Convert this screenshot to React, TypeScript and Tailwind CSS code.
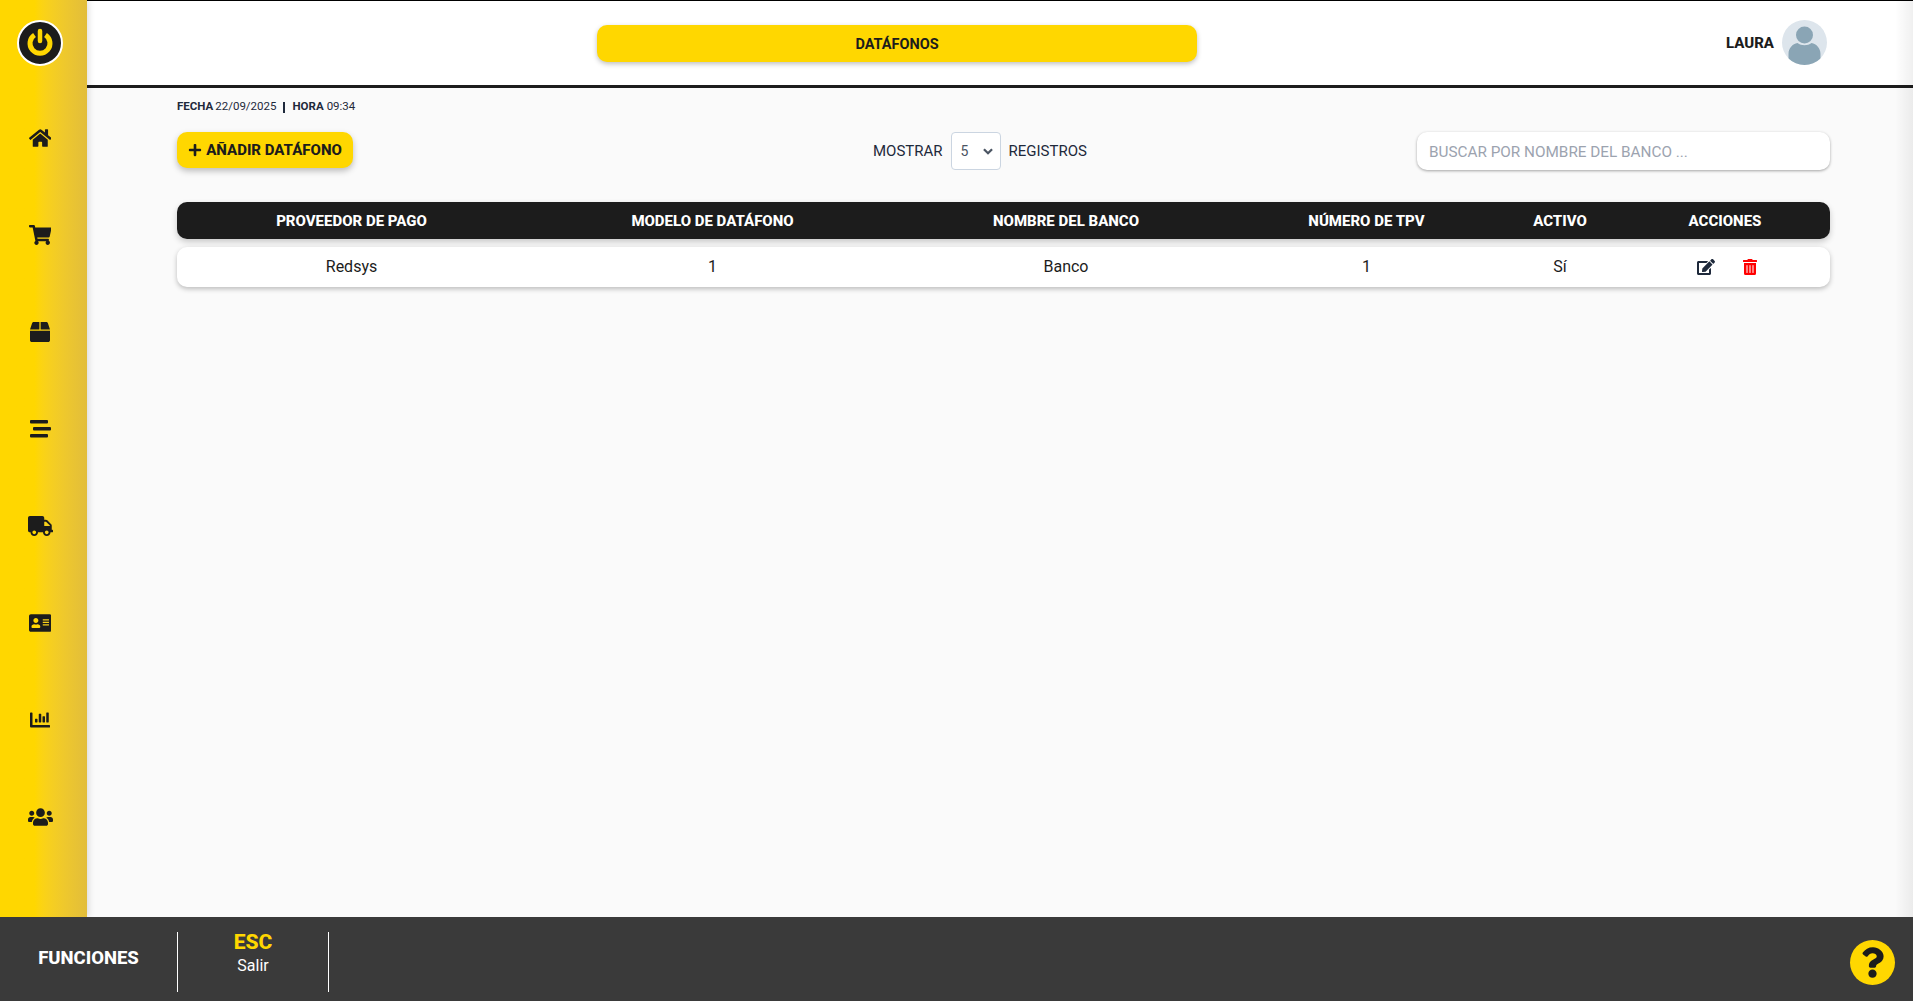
import { FaHome, FaShoppingCart, FaBox, FaTruck, FaAddressCard, FaChartBar, FaUsers, FaEdit, FaTrashAlt, FaPlus, FaQuestion } from "react-icons/fa";

function Bars({ className }: { className?: string }) {
  return (
    <svg viewBox="0 0 21 18" className={className} fill="#1c1c1c">
      <rect x="0" y="0" width="18" height="3.500" rx="1" />
      <rect x="3" y="7" width="18" height="3.500" rx="1" />
      <rect x="0" y="14" width="18" height="3.500" rx="1" />
    </svg>
  );
}

const nav = [
  { I: FaHome, c: "h-[20px] w-[22.500px]" },
  { I: FaShoppingCart, c: "h-[20px] w-[22.500px]" },
  { I: FaBox, c: "h-[20px] w-[20px]" },
  { I: Bars, c: "h-[18px] w-[21px]" },
  { I: FaTruck, c: "h-[20px] w-[25px]" },
  { I: FaAddressCard, c: "h-[20px] w-[22.500px]" },
  { I: FaChartBar, c: "h-[20px] w-[20px]" },
  { I: FaUsers, c: "h-[20px] w-[25px]" },
];
const cols = ["PROVEEDOR DE PAGO", "MODELO DE DATÁFONO", "NOMBRE DEL BANCO", "NÚMERO DE TPV", "ACTIVO", "ACCIONES"];
const row = ["Redsys", "1", "Banco", "1", "Sí"];
const grid = "grid grid-cols-[349px_373px_334px_267px_120px_210px] items-center";

function Power() {
  return (
    <div className="flex h-[46px] w-[46px] items-center justify-center rounded-full border-2 border-white bg-[#1c1c1c]">
      <svg viewBox="0 0 32 32" className="h-[32px] w-[32px]" fill="none" stroke="#ffd700" strokeLinecap="round">
        <path d="M10.500 8a10 10 0 1 0 11 0" strokeWidth="5" strokeLinecap="butt" />
        <path d="M16 4v10" strokeWidth="4.500" />
      </svg>
    </div>
  );
}

function Avatar() {
  return (
    <svg viewBox="0 0 45 45" className="h-[45px] w-[45px]">
      <defs>
        <clipPath id="av"><circle cx="22.5" cy="22.5" r="22.5" /></clipPath>
      </defs>
      <g clipPath="url(#av)">
        <rect width="45" height="45" fill="#dde5ec" />
        <circle cx="22.5" cy="15" r="8.5" fill="#8aa5b5" />
        <path d="M6.500 45V34c0-6 4-10 9-11 2 1.500 4.500 2.200 7 2.200s5-.7 7-2.200c5 1 9 5 9 11v11z" fill="#8aa5b5" />
      </g>
    </svg>
  );
}

export default function App() {
  return (
    <div className="relative flex h-[1001px] w-[1913px] flex-col overflow-hidden bg-[#fafafa] font-['Roboto',sans-serif] text-[#1c1c1c]">
      <div className="flex min-h-0 flex-1">
        <aside className="z-10 flex w-[87px] shrink-0 flex-col bg-gradient-to-r from-[#ffd700] from-40% to-[#e2bd3a] pr-[7px] shadow-[2px_0_6px_rgba(0,0,0,0.12)]">
          <div className="flex h-[85px] items-center justify-center pt-[1px]"><Power /></div>
          <nav className="flex flex-col items-center pt-[4px]">
            {nav.map(({ I, c }, i) => (
              <div key={i} className="flex h-[97px] w-full items-center justify-center">
                <I className={`${c} text-[#1c1c1c]`} />
              </div>
            ))}
          </nav>
        </aside>
        <div className="flex min-w-0 flex-1 flex-col">
          <header className="flex h-[88px] shrink-0 items-center justify-between border-t border-b-[3px] border-t-black border-b-[#1c1c1c] bg-white pr-[86px]">
            <div className="ml-[510px] flex h-[37px] w-[600px] items-center justify-center rounded-[10px] bg-[#ffd700] pt-[3px] text-[14.500px] font-bold shadow-[0_2px_5px_rgba(0,0,0,0.25)]">DATÁFONOS</div>
            <div className="mt-[-2px] flex items-center gap-[8px]">
              <span className="pt-[2px] text-[15px] font-extrabold">LAURA</span>
              <Avatar />
            </div>
          </header>
          <main className="flex-1 pl-[90px] pr-[83px] pt-[11px]">
            <div className="flex h-[16px] items-center text-[11.500px] text-[#1e293b]">
              <b>FECHA</b><span className="ml-[2px]">22/09/2025</span>
              <span className="mx-[7px] h-[11px] w-[2px] bg-[#1e293b]" />
              <b>HORA</b><span className="ml-[3px]">09:34</span>
            </div>
            <div className="mt-[17px] flex h-[38px] items-center">
              <button className="mb-[2px] flex h-[36px] w-[176px] items-center justify-center gap-[4px] rounded-[10px] bg-[#ffd700] text-[15px] font-extrabold text-[#1c1c1c] shadow-[0_3px_6px_rgba(0,0,0,0.25)]">
                <FaPlus className="h-[14px] w-[14px]" />AÑADIR DATÁFONO
              </button>
              <div className="ml-[520px] flex items-center gap-[8px] text-[15px] text-[#1e293b]">
                <span>MOSTRAR</span>
                <div className="flex h-[38px] w-[50px] items-center justify-between rounded-[4px] border border-[#cbd5e1] bg-white pl-[9px] pr-[3px] text-[14px] text-[#4b5563]">
                  5
                  <svg viewBox="0 0 20 20" className="h-[18px] w-[18px]" fill="none" stroke="#4b5563" strokeWidth="2.500"><path d="M5.500 8l4.500 4.500L14.500 8" /></svg>
                </div>
                <span>REGISTROS</span>
              </div>
              <input readOnly placeholder="BUSCAR POR NOMBRE DEL BANCO ..." className="ml-auto h-[38px] w-[413px] rounded-[10px] bg-white px-[12px] pt-[1px] text-[15.300px] text-[#9ca3af] shadow-[0_1px_3px_rgba(0,0,0,0.35)] outline-none placeholder:text-[#9ca3af]" />
            </div>
            <div className={`${grid} mt-[32px] h-[37px] rounded-[10px] bg-[#1c1c1c] pt-[1px] text-center text-[15px] font-extrabold text-white shadow-[0_3px_6px_rgba(0,0,0,0.2)]`}>
              {cols.map((c) => <div key={c}>{c}</div>)}
            </div>
            <div className={`${grid} mt-[8px] h-[40px] rounded-[10px] bg-white text-center text-[16px] text-[#1c1c1c] shadow-[0_2px_5px_rgba(0,0,0,0.25)]`}>
              {row.map((c, i) => <div key={i}>{c}</div>)}
              <div className="mb-[1px] ml-[3px] flex items-center justify-center gap-[28px]">
                <FaEdit className="h-[16px] w-[18px] text-[#1e293b]" />
                <FaTrashAlt className="h-[16px] w-[14px] text-[#ff0000]" />
              </div>
            </div>
          </main>
        </div>
      </div>
      <footer className="relative z-20 flex h-[84px] shrink-0 items-center bg-[#3a3a3a] text-white">
        <div className="flex w-[177px] justify-center text-[18.500px] font-extrabold">FUNCIONES</div>
        <div className="mt-[6px] h-[60px] w-[1px] bg-white" />
        <div className="mb-[12px] flex w-[150px] flex-col items-center leading-none">
          <span className="text-[21px] font-extrabold text-[#ffd700]">ESC</span>
          <span className="mt-[5px] text-[16px]">Salir</span>
        </div>
        <div className="mt-[6px] h-[60px] w-[1px] bg-white" />
        <div className="absolute right-[18px] top-[23px] flex h-[45px] w-[45px] items-center justify-center rounded-full bg-[#ffd700]">
          <FaQuestion className="h-[31px] w-[23px] text-[#1c1c1c]" />
        </div>
      </footer>
      <div className="pointer-events-none absolute right-0 top-0 z-10 h-[917px] w-[18px] bg-gradient-to-r from-transparent to-black/[0.06]" />
    </div>
  );
}
